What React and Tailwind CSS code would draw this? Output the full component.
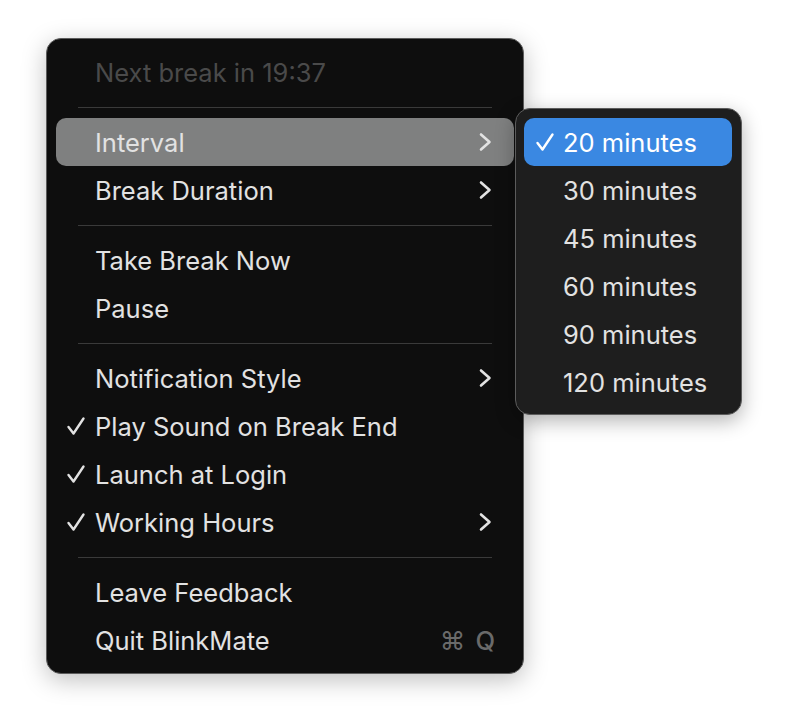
const Check = ({ className = '' }) => (
  <svg className={className} width="20" height="20" viewBox="0 0 20 20" fill="none">
    <path d="M2.5 11 L7.5 17.5 L17.5 2.5" stroke="currentColor" strokeWidth="2.4" strokeLinecap="round" strokeLinejoin="round" />
  </svg>
);

const Chevron = () => (
  <svg width="13" height="20" viewBox="0 0 13 20" fill="none">
    <path d="M2 2.5 L10.5 10 L2 17.5" stroke="currentColor" strokeWidth="2.6" strokeLinecap="round" strokeLinejoin="round" />
  </svg>
);

const Separator = () => (
  <div className="h-[22px] flex items-center px-[22px]">
    <div className="h-px w-full bg-[#3a3a3a]" />
  </div>
);

const Item = ({ label, checked, submenu, active, shortcut, disabled }) => (
  <div
    className={`h-12 rounded-[10px] flex items-center pr-[19px] ${active ? 'bg-[#7f8080]' : ''}`}
  >
    <div className="w-[39px] flex justify-end pr-[9px] text-[#e2e2e2]">
      {checked && <Check />}
    </div>
    <span className={`flex-1 pt-[2px] ${disabled ? 'text-[#4a4a4a]' : 'text-[#e2e2e2]'}`}>{label}</span>
    {submenu && (
      <span className="text-[#e2e2e2] mr-[3px] flex">
        <Chevron />
      </span>
    )}
    {shortcut && (
      <span className="text-[#6a6a6a] pt-[2px] flex items-center gap-[10px]">
        <span>⌘</span>
        <span className="font-medium">Q</span>
      </span>
    )}
  </div>
);

const intervals = ['20 minutes', '30 minutes', '45 minutes', '60 minutes', '90 minutes', '120 minutes'];

export default function App() {
  return (
    <div
      className="min-h-screen bg-white pt-[38px] pl-[46px] flex items-start text-[25.5px] leading-none"
      style={{ fontFamily: 'Inter, "Noto Sans", sans-serif' }}
    >
      <div className="w-[478px] rounded-[15px] bg-[#0e0e0e] border border-[#5c5c5c] shadow-[0_6px_24px_rgba(0,0,0,0.25)] px-[9px] py-[9px]">
        <Item label="Next break in 19:37" disabled />
        <Separator />
        <Item label="Interval" submenu active />
        <Item label="Break Duration" submenu />
        <Separator />
        <Item label="Take Break Now" />
        <Item label="Pause" />
        <Separator />
        <Item label="Notification Style" submenu />
        <Item label="Play Sound on Break End" checked />
        <Item label="Launch at Login" checked />
        <Item label="Working Hours" checked submenu />
        <Separator />
        <Item label="Leave Feedback" />
        <Item label="Quit BlinkMate" shortcut />
      </div>

      <div className="relative -ml-[9px] mt-[70px] w-[227px] rounded-[15px] bg-[#1e1e1e] border border-[#5c5c5c] shadow-[0_6px_20px_rgba(0,0,0,0.3)] pl-[8px] pr-[9px] pt-[9px] pb-[8px]">
        {intervals.map((m, i) => (
          <div
            key={m}
            className={`h-12 rounded-[10px] flex items-center ${i === 0 ? 'bg-[#3a88e2] text-white' : 'text-[#e2e2e2]'}`}
          >
            <div className="w-[39px] flex justify-end pr-[8px]">{i === 0 && <Check />}</div>
            <span className="pt-[2px]">{m}</span>
          </div>
        ))}
      </div>
    </div>
  );
}
